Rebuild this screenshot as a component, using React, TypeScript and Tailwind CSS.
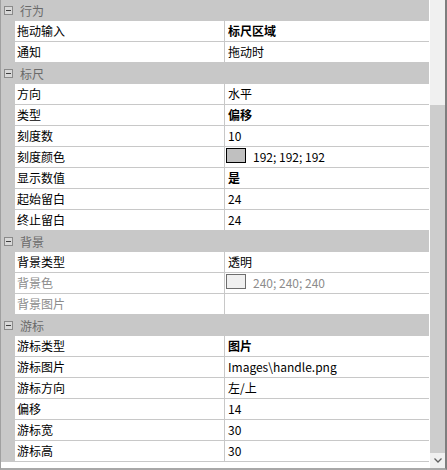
import React from "react";

type Row = {
  name: string;
  value?: string;
  bold?: boolean;
  swatch?: string;
  disabled?: boolean;
};

type Group = { title: string; rows: Row[] };

const groups: Group[] = [
  {
    title: "行为",
    rows: [
      { name: "拖动输入", value: "标尺区域", bold: true },
      { name: "通知", value: "拖动时" },
    ],
  },
  {
    title: "标尺",
    rows: [
      { name: "方向", value: "水平" },
      { name: "类型", value: "偏移", bold: true },
      { name: "刻度数", value: "10" },
      { name: "刻度颜色", value: "192; 192; 192", swatch: "#c0c0c0" },
      { name: "显示数值", value: "是", bold: true },
      { name: "起始留白", value: "24" },
      { name: "终止留白", value: "24" },
    ],
  },
  {
    title: "背景",
    rows: [
      { name: "背景类型", value: "透明" },
      { name: "背景色", value: "240; 240; 240", swatch: "#f0f0f0", disabled: true },
      { name: "背景图片", disabled: true },
    ],
  },
  {
    title: "游标",
    rows: [
      { name: "游标类型", value: "图片", bold: true },
      { name: "游标图片", value: "Images\\handle.png" },
      { name: "游标方向", value: "左/上" },
      { name: "偏移", value: "14" },
      { name: "游标宽", value: "30" },
      { name: "游标高", value: "30" },
    ],
  },
];

function CategoryRow({ title }: { title: string }) {
  return (
    <div className="h-[21px] flex items-center bg-[#c8c8c8] shrink-0">
      <div className="ml-[3px] w-[9px] h-[9px] border border-[#8a8a8a] bg-[#d8d8d8] flex items-center justify-center">
        <div className="w-[5px] h-px bg-[#404040]" />
      </div>
      <span className="ml-[7px] text-[#6a6a6a] leading-none">{title}</span>
    </div>
  );
}

function PropertyRow({ row }: { row: Row }) {
  const textColor = row.disabled ? "text-[#8c8c8c]" : "text-black";
  return (
    <div className="h-[21px] flex shrink-0">
      <div className="w-[14px] bg-[#c8c8c8]" />
      <div
        className={`w-[210px] bg-white border-r border-b border-[#c8c8c8] pl-[2px] flex items-center ${textColor}`}
      >
        {row.name}
      </div>
      <div
        className={`flex-1 bg-white border-b border-[#c8c8c8] flex items-center ${textColor}`}
      >
        {row.swatch && (
          <div
            className={`self-start mt-[1px] ml-[1px] w-[20px] h-[15px] border ${
              row.disabled ? "border-[#6d6d6d]" : "border-black"
            }`}
            style={{ backgroundColor: row.swatch }}
          />
        )}
        <span
          className={`${row.swatch ? "ml-[7px]" : "ml-[3px]"} ${
            row.bold ? "font-bold" : ""
          }`}
        >
          {row.value}
        </span>
      </div>
    </div>
  );
}

export default function App() {
  return (
    <div
      className="w-[447px] h-[470px] flex border-l border-l-[#a0a0a0] border-r-2 border-r-[#7e7e7e] border-b-2 border-b-[#a8a8a8] bg-white text-[12px] overflow-hidden"
      style={{ fontFamily: '"Noto Sans CJK SC", "Noto Sans", sans-serif' }}
    >
      <div className="w-[428px] flex flex-col">
        {groups.map((g) => (
          <React.Fragment key={g.title}>
            <CategoryRow title={g.title} />
            {g.rows.map((r) => (
              <PropertyRow key={g.title + r.name} row={r} />
            ))}
          </React.Fragment>
        ))}
        <div className="flex-1 bg-white" />
      </div>
      <div className="w-px bg-white" />
      <div className="w-[15px] bg-[#f0f0f0] flex flex-col">
        <div className="h-[105px]" />
        <div className="flex-1 bg-[#cdcdcd]" />
        <div className="h-[15px] flex items-center justify-center">
          <svg width="8" height="5" viewBox="0 0 8 5">
            <path d="M0.5 0.5 L4 4 L7.5 0.5" fill="none" stroke="#606060" strokeWidth="1.3" />
          </svg>
        </div>
      </div>
    </div>
  );
}
